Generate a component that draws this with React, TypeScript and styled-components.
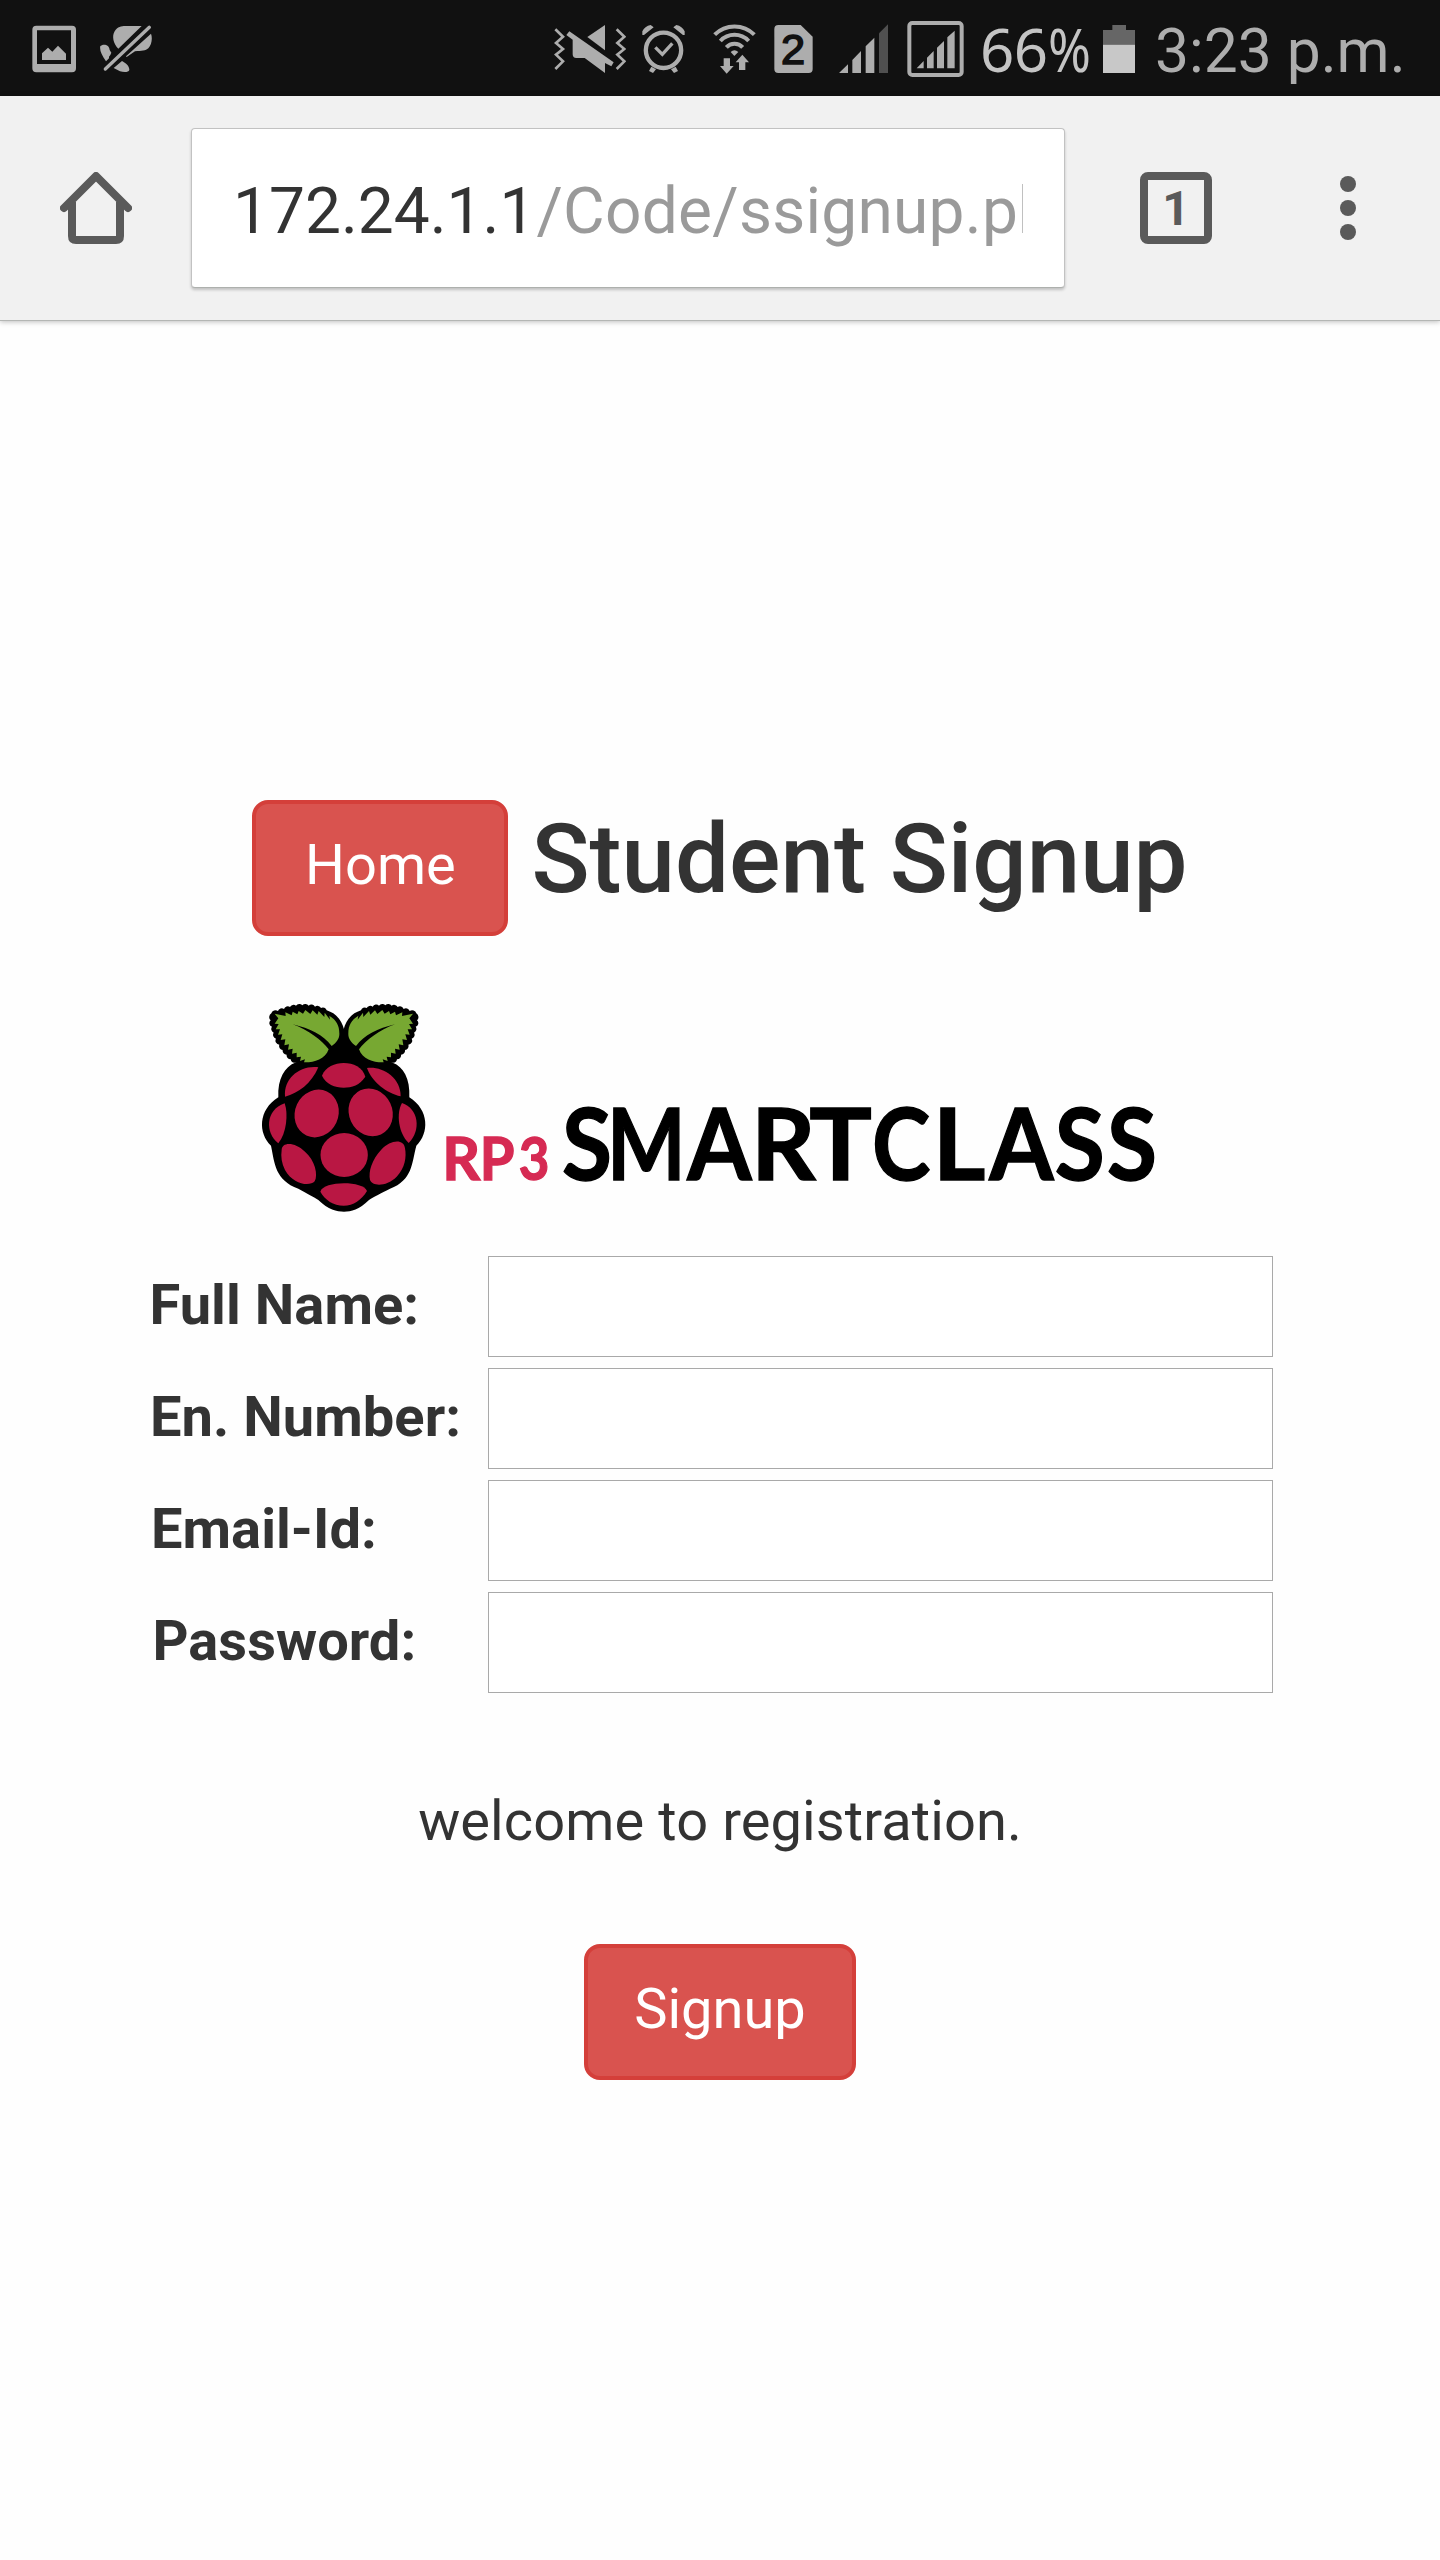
import React from "react";
import styled, { createGlobalStyle } from "styled-components";

const fields = [
    { id: "fullname", label: "Full Name:", type: "text", indent: 0.5 },
    { id: "ennumber", label: "En. Number:", type: "text", indent: 1 },
    { id: "email", label: "Email-Id:", type: "text", indent: 2 },
    { id: "password", label: "Password:", type: "password", indent: 3.5 },
];

// x position and drawn advance of every letter of the wordmark
const wordmark = [
    { ch: "S", x: 966, w: 150 },
    { ch: "M", x: 1101, w: 236 },
    { ch: "A", x: 1342, w: 193 },
    { ch: "R", x: 1533, w: 194 },
    { ch: "T", x: 1708, w: 188 },
    { ch: "C", x: 1896, w: 175 },
    { ch: "L", x: 2078, w: 158 },
    { ch: "A", x: 2248, w: 193 },
    { ch: "S", x: 2444, w: 150 },
    { ch: "S", x: 2601, w: 150 },
];

const prefix = [
    { ch: "R", x: 607, w: 114 },
    { ch: "P", x: 719, w: 104 },
    { ch: "3", x: 836, w: 92 },
];

const GlobalStyle = createGlobalStyle`
    *{
        box-sizing:border-box;
    }
    body{
        margin:0;
        background-color:#fefefe;
        font-family:Roboto, "Liberation Sans", sans-serif;
        color:#333333;
    }
`;

const Screen = styled.div`
    display:flex;
    flex-direction:column;
    width:1440px;
    height:2560px;
    overflow:hidden;
`;

const StatusBar = styled.header`
    display:flex;
    height:96px;
    flex:none;
    background-color:#111111;
    color:#adadad;
`;

const StatusLeft = styled.div`
    display:flex;
    flex:1;
    padding-left:32px;
    gap:24px;
`;

const StatusRight = styled.div`
    display:flex;
    width:886px;
`;

// every status glyph is as tall as the bar, only the width differs
const StatusIcon = styled.svg<{ $width: number; $gap?: number }>`
    display:block;
    flex:none;
    width:${(p) => p.$width}px;
    height:96px;
    margin-left:${(p) => p.$gap || 0}px;
    fill:#adadad;
`;

const BatteryLevel = styled.span`
    width:123px;
    margin-left:16px;
    font-family:"Noto Sans", "Open Sans", sans-serif;
    font-size:60px;
    line-height:98px;
    letter-spacing:-0.5px;
    color:#c4c4c4;
    white-space:nowrap;
`;

const Percent = styled.span`
    display:inline-block;
    transform:scaleX(0.86);
    transform-origin:left;
`;

const Clock = styled.span`
    margin-left:20px;
    font-size:60.5px;
    line-height:104px;
    color:#adadad;
    white-space:nowrap;
`;

const Toolbar = styled.nav`
    display:flex;
    align-items:flex-start;
    flex:none;
    height:225px;
    padding:32px 84px 0 60px;
    background-color:#f1f1f1;
    border-bottom:1px solid #b4b6b4;
    box-shadow:0 1px 5px rgba(0,0,0,0.25);
`;

const HomeIcon = styled.svg`
    display:block;
    width:72px;
    height:72px;
    margin-top:44px;
    fill:none;
    stroke:#5a5a5a;
    stroke-width:8;
`;

const UrlBox = styled.div`
    width:874px;
    height:160px;
    margin-left:59px;
    padding:0 41px;
    background-color:#ffffff;
    border:1px solid #c2c2c2;
    border-bottom-color:#adb0ad;
    border-radius:4px;
    box-shadow:0 2px 3px rgba(0,0,0,0.2);
`;

const UrlText = styled.div`
    overflow:hidden;
    font-size:64px;
    line-height:165px;
    height:158px;
    color:#333333;
    white-space:nowrap;
`;

const UrlPath = styled.span`
    margin-left:1px;
    letter-spacing:0.25px;
    color:#9a9a9a;
`;

const TabCount = styled.div`
    width:72px;
    height:72px;
    margin:44px 0 0 75px;
    border:8px solid #5a5a5a;
    border-radius:8px;
    font-size:48px;
    font-weight:700;
    line-height:57px;
    text-align:center;
    color:#5a5a5a;
`;

const MenuDots = styled.div`
    display:flex;
    flex-direction:column;
    gap:8px;
    margin:48px 0 0 128px;
`;

const Dot = styled.i`
    width:16px;
    height:16px;
    border-radius:50%;
    background-color:#5a5a5a;
`;

const Page = styled.main`
    display:flex;
    flex-direction:column;
    align-items:center;
    padding-top:479px;
`;

const TitleRow = styled.div`
    display:flex;
    align-items:flex-start;
    gap:23px;
    height:136px;
`;

const Button = styled.button<{ $width: number }>`
    flex:none;
    width:${(p) => p.$width}px;
    height:136px;
    padding:21px 0 27px;
    border:4px solid #d43f3a;
    border-radius:16px;
    background-color:#d9534f;
    font-family:inherit;
    font-size:56px;
    line-height:80px;
    text-align:center;
    color:#ffffff;
    cursor:pointer;
`;

const Title = styled.h3`
    margin:6px 0 0;
    font-size:96px;
    font-weight:500;
    line-height:106px;
    white-space:nowrap;
`;

const Logo = styled.svg`
    display:block;
    width:960px;
    height:250px;
    margin-top:44px;
`;

const LogoText = styled.text<{ $size: number; $color: string }>`
    font-family:Lato, "Open Sans", sans-serif;
    font-size:${(p) => p.$size}px;
    font-weight:700;
    fill:${(p) => p.$color};
    stroke:${(p) => p.$color};
    stroke-width:4;
`;

const Form = styled.form`
    display:flex;
    flex-direction:column;
    gap:11px;
    width:1124px;
    margin:26px 0 0 -18px;
`;

const Field = styled.div`
    display:flex;
    align-items:center;
    justify-content:space-between;
`;

const Label = styled.label<{ $indent: number }>`
    padding:0 0 3px ${(p) => p.$indent}px;
    font-size:56px;
    font-weight:700;
    line-height:80px;
    letter-spacing:0.05px;
`;

const Input = styled.input`
    width:785px;
    height:101px;
    padding:0 12px;
    border:1px solid #a9a9a9;
    border-radius:0;
    background-color:#ffffff;
    font-size:56px;
    outline:none;
`;

const Message = styled.p`
    margin:88px 0 83px;
    font-size:56px;
    line-height:80px;
    letter-spacing:0.1px;
`;

const LEAF_OUTER =
    "M165 248A12 12 0 0 1 152 238A12 12 0 0 1 140 224A12 12 0 0 1 128 210A12 12 0 0 1 118 194A12 12 0 0 1 108 176A12 12 0 0 1 101 158A12 12 0 0 1 96 140A11 11 0 0 1 92 121A13 13 0 0 1 94 100A13 13 0 0 1 114 93A12 12 0 0 1 132 87A12 12 0 0 1 150 81A12 12 0 0 1 168 77A12 12 0 0 1 187 76A12 12 0 0 1 206 77A12 12 0 0 1 225 80A12 12 0 0 1 243 84A12 12 0 0 1 260 91C288 100 305 120 312 148L330 250Z";
const LEAF_INNER =
    "M275 198C290 188 299 175 298 160C298 135 288 120 268 107L270 119L254 98L253 111L236 93L232 104L218 91L211 102L196 90L189 101L176 93L172 103L158 95L155 106L136 97L137 108L104 101L115 115L104 131L116 132L107 148L120 148L114 164L127 163L122 180L136 178L133 196L147 193L144 209L158 206L156 221L170 218L170 232L183 230L180 243L195 238L192 247C220 248 255 240 266 208C245 180 205 150 158 133C210 145 250 165 275 198Z";

const SmartclassLogo = () => {
    return (
        <Logo viewBox="0 0 2880 750">
            <path d="M312 148L270 200L165 248C135 260 112 295 115 352C54 390 54 460 93 497C104 550 105 600 175 626C200 640 220 650 235 660C265 690 290 695 312 695C334 695 357 690 387 660C402 650 422 640 450 626C518 600 515 550 529 497C568 460 568 390 508 352C511 295 490 260 458 248L353 200Z" />
            <path d={LEAF_OUTER} />
            <path d={LEAF_INNER} fill="#77a832" />
            <g transform="translate(623 0) scale(-1 1)">
                <path d={LEAF_OUTER} />
                <path d={LEAF_INNER} fill="#77a832" />
            </g>
            <g fill="#b91743">
                <path d="M246 287C256 260 285 249 311 249C340 249 368 262 376 290C360 315 335 323 311 323C285 323 258 312 246 287Z" />
                <path d="M235 262C180 255 130 295 135 350C175 340 215 310 235 262Z" />
                <path d="M381 264C425 258 482 290 482 349C440 340 395 305 381 264Z" />
                <ellipse cx="230" cy="400.500" rx="65" ry="73" transform="rotate(25 230 400.5)" />
                <ellipse cx="392" cy="397" rx="65" ry="73" transform="rotate(-25 392 397)" />
                <ellipse cx="312.500" cy="525" rx="71" ry="66" />
                <path d="M134 370C145 400 140 460 115 490C75 460 75 390 134 370Z" />
                <path d="M486 369C535 385 545 450 506 489C475 460 468 400 486 369Z" />
                <path d="M125 510C125 485 165 485 195 515C225 540 235 585 224 604C210 620 160 615 135 570C125 550 122 530 125 510Z" />
                <path d="M495 505C492 475 450 480 425 508C395 540 385 575 390 600C398 620 440 620 470 590C495 565 500 530 495 505Z" />
                <path d="M241 635C250 602 370 602 381 633C365 660 340 677 311 677C280 677 255 660 241 635Z" />
            </g>
            <LogoText $size={180} $color="#d62a53" y="601">
                {prefix.map((l, i) => (
                    <tspan key={i} x={l.x} textLength={l.w} lengthAdjust="spacingAndGlyphs">{l.ch}</tspan>
                ))}
            </LogoText>
            <LogoText $size={298} $color="#000000" y="601">
                {wordmark.map((l, i) => (
                    <tspan key={i} x={l.x} textLength={l.w} lengthAdjust="spacingAndGlyphs">{l.ch}</tspan>
                ))}
            </LogoText>
        </Logo>
    );
};

const App = () => {
    return (
        <Screen>
            <GlobalStyle />
            <StatusBar>
                <StatusLeft>
                    <StatusIcon $width={44} viewBox="96 0 132 288">
                        <path fillRule="evenodd" d="M109 77H216Q228 77 228 89V205Q228 217 216 217H109Q97 217 97 205V89Q97 77 109 77ZM111 91V192H213V91Z" />
                        <path d="M126 180V160L144 143L157 155L174 137L198 161V180Z" />
                    </StatusIcon>
                    <StatusIcon $width={52} viewBox="300 0 156 288">
                        <path d="M375 78H425L355 146C340 132 335 108 344 94C352 80 365 78 375 78Z" />
                        <path d="M453 101C458 115 455 135 445 145C437 152 425 153 405 154L380 171L378 169Z" />
                        <path d="M309 134C320 133 328 138 329 150L334 158L331 165L327 170V175L318 184C305 165 298 150 301 138Z" />
                        <path d="M366 183C380 190 388 200 388 210C386 218 370 217 360 214L341 204Z" />
                        <path d="M316 207L448 82" stroke="#adadad" strokeWidth="10" strokeLinecap="round" />
                    </StatusIcon>
                </StatusLeft>
                <StatusRight>
                    <StatusIcon $width={72} viewBox="72 0 216 288">
                        <path d="M76 88L99 110L78 129L99 147L78 164L99 184L76 207M260 88L283 110L262 129L283 147L262 164L283 184L260 207" fill="none" stroke="#adadad" strokeWidth="8" />
                        <path d="M225 75V151L172 111Z" />
                        <path d="M118 94L251 187L244 199L225 189V219L164 174H139Q128 174 128 163V119L109 105Z" />
                    </StatusIcon>
                    <StatusIcon $width={43} $gap={16} viewBox="336 0 129 288">
                        <circle cx="400.500" cy="151" r="53" fill="none" stroke="#adadad" strokeWidth="13" />
                        <path d="M376 142L397 163L427 130" fill="none" stroke="#adadad" strokeWidth="10" />
                        <path d="M337 94C342 84 350 77 362 75L371 82L342 105H337ZM464 94C459 84 451 77 439 75L430 82L459 105H464Z" />
                        <path d="M364 200L378 208L369 219L357 213ZM437 200L423 208L432 219L444 213Z" />
                    </StatusIcon>
                    <StatusIcon $width={43} $gap={28} viewBox="549 0 129 288">
                        <path d="M554 104A84 84 0 0 1 673 104M571 123A58 58 0 0 1 656 123M589 142A33 33 0 0 1 638 142" fill="none" stroke="#adadad" strokeWidth="12" />
                        <path d="M602 156Q613 146 625 156L613 168Z" />
                        <path d="M581 175H600V198H611L590 221L570 198H581ZM637 164L657 187H646V210H627V187H617Z" />
                    </StatusIcon>
                    <StatusIcon $width={39} $gap={18} viewBox="732 0 117 288">
                        <path d="M745 75H812L848 110V207Q848 219 836 219H745Q733 219 733 207V87Q733 75 745 75Z" />
                        <text x="753" y="192" fontFamily="Liberation Sans, sans-serif" fontSize="130" fill="#111111" stroke="#111111" strokeWidth="5">2</text>
                    </StatusIcon>
                    <StatusIcon $width={49} $gap={26} viewBox="57 0 147 288">
                        <path d="M57 219L84 193V219ZM97 180L123 153V219H97ZM137 139L163 113V219H137Z" />
                        <path d="M177 100L204 73V219H177Z" fill="#505050" />
                    </StatusIcon>
                    <StatusIcon $width={57} $gap={19} viewBox="261 0 171 288">
                        <rect x="268" y="69" width="157" height="156" rx="9" fill="none" stroke="#adadad" strokeWidth="12" />
                        <path d="M290 205L311 183V205ZM321 173L341 153V205H321ZM351 143L372 123V205H351ZM382 112L404 92V205H382Z" />
                    </StatusIcon>
                    <BatteryLevel>66<Percent>%</Percent></BatteryLevel>
                    <StatusIcon $width={32} viewBox="849 0 96 288">
                        <path d="M849 90H877V75H918V90H945V134H849Z" fill="#666666" />
                        <path d="M849 134H945V219H849Z" fill="#c8c8c8" />
                    </StatusIcon>
                    <Clock>3:23 p.m.</Clock>
                </StatusRight>
            </StatusBar>
            <Toolbar>
                <HomeIcon viewBox="60 172 72 72">
                    <path d="M64 208L96 176L128 208" strokeLinecap="round" strokeLinejoin="round" />
                    <path d="M72 202V236Q72 240 76 240H116Q120 240 120 236V202" />
                </HomeIcon>
                <UrlBox>
                    <UrlText>172.24.1.1<UrlPath>/Code/ssignup.php</UrlPath></UrlText>
                </UrlBox>
                <TabCount>1</TabCount>
                <MenuDots>
                    <Dot />
                    <Dot />
                    <Dot />
                </MenuDots>
            </Toolbar>
            <Page>
                <TitleRow>
                    <Button type="button" $width={256}>Home</Button>
                    <Title>Student Signup</Title>
                </TitleRow>
                <SmartclassLogo />
                <Form id="signup">
                    {fields.map((f) => (
                        <Field key={f.id}>
                            <Label htmlFor={f.id} $indent={f.indent}>{f.label}</Label>
                            <Input id={f.id} type={f.type} />
                        </Field>
                    ))}
                </Form>
                <Message>welcome to registration.</Message>
                <Button type="submit" form="signup" $width={272}>Signup</Button>
            </Page>
        </Screen>
    );
};

export default App;
